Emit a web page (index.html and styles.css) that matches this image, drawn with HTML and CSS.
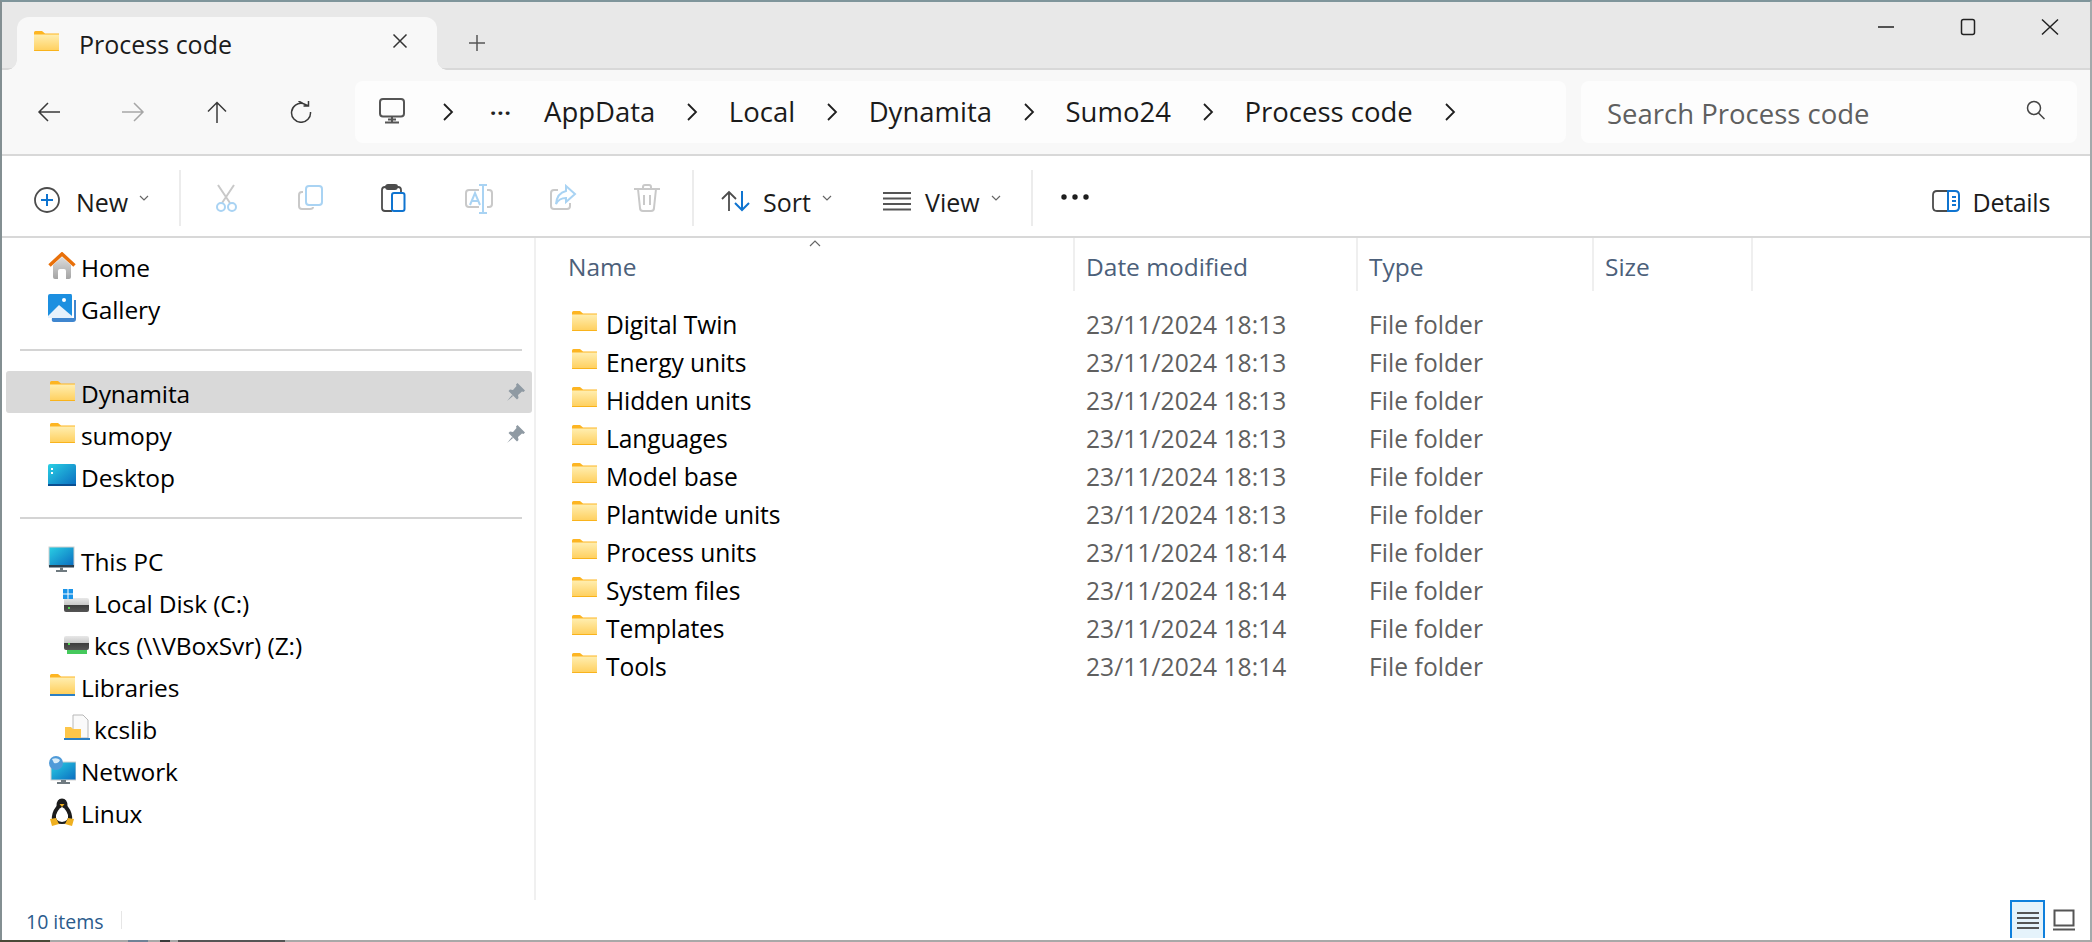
FILE: index.html
```html
<!DOCTYPE html>
<html lang="en">
<head>
<meta charset="utf-8">
<title>Process code</title>
<link rel="stylesheet" href="styles.css">
</head>
<body>
<svg class="defs" width="0" height="0" aria-hidden="true">
  <defs>
    <linearGradient id="fg" x1="0" y1="0" x2="0" y2="1"><stop offset="0" stop-color="#ffeeb0"/><stop offset="1" stop-color="#ffcf5c"/></linearGradient>
    <linearGradient id="hg" x1="0" y1="0" x2="0" y2="1"><stop offset="0" stop-color="#dcdcdc"/><stop offset="1" stop-color="#a4a4a4"/></linearGradient>
    <linearGradient id="bg" x1="0" y1="0" x2="1" y2="1"><stop offset="0" stop-color="#2ad0e4"/><stop offset="1" stop-color="#0a6cc0"/></linearGradient>
    <linearGradient id="dg" x1="0" y1="0" x2="0" y2="1"><stop offset="0" stop-color="#e8e8e8"/><stop offset=".5" stop-color="#c8c8c8"/><stop offset=".5" stop-color="#3c3c3c"/><stop offset="1" stop-color="#555"/></linearGradient>
    <symbol id="folder" viewBox="0 0 25 20">
      <path d="M0 1.5A1.5 1.5 0 0 1 1.5 0H8l3 2.5H25V6H0Z" fill="#fdb522"/>
      <path d="M0 3.500H25V18.500A1.500 1.500 0 0 1 23.500 20H1.500A1.500 1.500 0 0 1 0 18.500Z" fill="url(#fg)"/>
      <path d="M0 19H25V19.500Q25 20 24 20H1Q0 20 0 19.500Z" fill="#f9b31c"/>
    </symbol>
    <symbol id="pin" viewBox="0 0 20 20">
      <path d="M11.500 1 19 8.500 17.500 10 16 9.500 12 13 12.500 16 11 17.500 2.500 9 4 7.500 7 8 10.500 4 10 2.500Z M6 13 1 19 7 14Z" fill="#8f9aa3"/>
    </symbol>
  </defs>
</svg>

<div class="window">
  <header class="titlebar">
    <div class="tab">
      <svg class="tab-folder"><use href="#folder"/></svg>
      <span class="tab-title">Process code</span>
      <svg class="tab-close" viewBox="0 0 16 16"><path d="M1.500 1.500 14.500 14.500M14.500 1.500 1.500 14.500"/></svg>
    </div>
    <svg class="tab-plus" viewBox="0 0 18 18"><path d="M9 1V17M1 9H17"/></svg>
    <div class="winctl">
      <svg class="wc" viewBox="0 0 18 18"><path d="M1 9H17"/></svg>
      <svg class="wc" viewBox="0 0 18 18"><rect x="2.500" y="1.500" width="13" height="15" rx="2"/></svg>
      <svg class="wc" viewBox="0 0 18 18"><path d="M1 1.500 17 16.500M17 1.500 1 16.500"/></svg>
    </div>
  </header>

  <nav class="navbar">
    <div class="navbtn"><svg class="navicon" viewBox="0 0 24 22"><path d="M23 11H2M11 2 2 11l9 9"/></svg></div>
    <div class="navbtn"><svg class="navicon off" viewBox="0 0 24 22"><path d="M1 11H22M13 2l9 9-9 9"/></svg></div>
    <div class="navbtn"><svg class="navicon" viewBox="0 0 24 22"><path d="M12 22V2M3 10.500 12 1.500l9 9"/></svg></div>
    <div class="navbtn"><svg class="navicon" viewBox="0 0 24 22"><path d="M14 2.500A9.500 9.500 0 1 0 21.500 11M14 2.500 9.500 0M14 2.500 19.500 5M19.500 0V5H14.500"/></svg></div>
    <div class="address">
      <svg class="addr-pc" viewBox="0 0 26 26"><rect x="1" y="1" width="24" height="17.500" rx="3"/><path d="M13 18.500V24M6 24.500H20M9 21.500H17"/></svg>
      <svg class="chev chev-first" viewBox="0 0 12 20"><path d="M2 2l8 8-8 8"/></svg>
      <span class="crumb-dots">···</span>
      <span class="crumb">AppData</span>
      <svg class="chev" viewBox="0 0 12 20"><path d="M2 2l8 8-8 8"/></svg>
      <span class="crumb">Local</span>
      <svg class="chev" viewBox="0 0 12 20"><path d="M2 2l8 8-8 8"/></svg>
      <span class="crumb">Dynamita</span>
      <svg class="chev" viewBox="0 0 12 20"><path d="M2 2l8 8-8 8"/></svg>
      <span class="crumb">Sumo24</span>
      <svg class="chev" viewBox="0 0 12 20"><path d="M2 2l8 8-8 8"/></svg>
      <span class="crumb">Process code</span>
      <svg class="chev" viewBox="0 0 12 20"><path d="M2 2l8 8-8 8"/></svg>
    </div>
    <div class="search">
      <span class="search-text">Search Process code</span>
      <svg class="search-icon" viewBox="0 0 20 20"><circle cx="8" cy="8" r="6.500"/><path d="M12.500 13 18.500 19"/></svg>
    </div>
  </nav>

  <div class="toolbar">
    <div class="tb-new">
      <svg class="ic-new" viewBox="0 0 26 26"><circle cx="13" cy="13" r="12" class="st-dark"/><path d="M13 7V19M7 13H19" class="st-blue"/></svg>
      <span class="tb-label">New</span>
      <svg class="mini-chev" viewBox="0 0 10 6"><path d="M1 1 5 5 9 1"/></svg>
    </div>
    <span class="tb-sep"></span>
    <div class="tb-icons">
      <div class="tb-icon"><svg class="ic" viewBox="0 0 28 28"><path d="M5 1 17 19M21 1 9 19" class="st-grey"/><circle cx="8" cy="23" r="4" class="st-lblue"/><circle cx="19" cy="23" r="4" class="st-lblue"/></svg></div>
      <div class="tb-icon"><svg class="ic" viewBox="0 0 28 28"><path d="M6 8H5Q2 8 2 11V22Q2 25 5 25H13Q16 25 16 23" class="st-grey"/><rect x="9" y="2" width="16" height="19" rx="3" class="st-lblue"/></svg></div>
      <div class="tb-icon"><svg class="ic" viewBox="0 0 28 28"><path d="M11 27H4Q1 27 1 24V6Q1 3 4 3H17Q20 3 20 6V8M5 3V2.500Q5 1 7 1H14Q16 1 16 2.500V3Q16 5 14 5H7Q5 5 5 3Z" class="st-dark"/><rect x="11" y="9" width="12.500" height="18" rx="2" class="st-blue"/></svg></div>
      <div class="tb-icon"><svg class="ic ic-w" viewBox="0 0 30 30"><path d="M15 6H5Q2 6 2 9V20Q2 23 5 23H15M23 6H25Q28 6 28 9V20Q28 23 25 23H23" class="st-grey"/><path d="M15 1H23M19 1V29M15 29H23M6 21 11 9 16 21M8 17H14" class="st-lblue"/></svg></div>
      <div class="tb-icon"><svg class="ic" viewBox="0 0 28 28"><path d="M9 6H5Q2 6 2 9V22Q2 25 5 25H18Q21 25 21 22V19" class="st-grey"/><path d="M17 2 26 10 17 18V14Q10 14 7 20 8 9 17 7Z" class="st-lblue"/></svg></div>
      <div class="tb-icon"><svg class="ic" viewBox="0 0 28 28"><path d="M1 5H27M5 5 7 24Q7 27 10 27H18Q21 27 21 24L23 5M10 5V3Q10 1 12 1H16Q18 1 18 3V5M11 11V21M17 11V21" class="st-grey"/></svg></div>
    </div>
    <span class="tb-sep tb-sep-2"></span>
    <div class="tb-sort">
      <svg class="ic-sort" viewBox="0 0 30 22"><path d="M8 21V2M1 9 8 2l7 7" class="st-dark"/><path d="M21 1V20M14 13l7 7 7-7" class="st-blue"/></svg>
      <span class="tb-label">Sort</span>
      <svg class="mini-chev" viewBox="0 0 10 6"><path d="M1 1 5 5 9 1"/></svg>
    </div>
    <div class="tb-view">
      <svg class="ic-view" viewBox="0 0 28 20"><path d="M0 2H28M0 7.500H28M0 13H28M0 18.500H28"/></svg>
      <span class="tb-label">View</span>
      <svg class="mini-chev" viewBox="0 0 10 6"><path d="M1 1 5 5 9 1"/></svg>
    </div>
    <span class="tb-sep tb-sep-3"></span>
    <svg class="ic-more" viewBox="0 0 28 6"><circle cx="3" cy="3" r="2.700"/><circle cx="14" cy="3" r="2.700"/><circle cx="25" cy="3" r="2.700"/></svg>
    <div class="tb-details">
      <svg class="ic-details" viewBox="0 0 28 22"><path d="M16 1H5Q1 1 1 5V17Q1 21 5 21H16" class="st-dark"/><path d="M16 1H23Q27 1 27 5V17Q27 21 23 21H16Z" class="st-blue"/><path d="M20 7H24M20 11H24M20 15H24" class="st-blue"/></svg>
      <span class="tb-label tb-label-tight">Details</span>
    </div>
  </div>

  <main class="main">
    <aside class="sidebar">
      <div class="row">
        <svg class="row-ic" viewBox="0 0 28 28"><path d="M5 13 14 5 23 13V25Q23 27 21 27H18V19Q18 17 16 17H12Q10 17 10 19V27H7Q5 27 5 25Z" fill="url(#hg)"/><path d="M1.500 13.500 14 2 26.500 13.500" fill="none" stroke="#e8700a" stroke-width="3.500"/></svg>
        <span>Home</span>
      </div>
      <div class="row">
        <svg class="row-ic" viewBox="0 0 28 28"><path d="M4 24H26V6H28V25Q28 28 25 28H6Q3 28 4 24Z" fill="#3f86cf"/><path d="M2 0H23Q24 0 24 2V22Q24 24 22 24H2Q0 24 0 22V2Q0 0 2 0Z" fill="#1c8fe0"/><path d="M0 22 11 11 24 22V24H0Z" fill="#e6f1fb"/><circle cx="16" cy="6" r="2" fill="#fff"/></svg>
        <span>Gallery</span>
      </div>
      <div class="side-sep side-sep-a"></div>
      <div class="row row-mid row-active">
        <svg class="row-folder"><use href="#folder"/></svg>
        <span>Dynamita</span>
        <svg class="row-pin"><use href="#pin"/></svg>
      </div>
      <div class="row row-mid">
        <svg class="row-folder"><use href="#folder"/></svg>
        <span>sumopy</span>
        <svg class="row-pin"><use href="#pin"/></svg>
      </div>
      <div class="row row-mid">
        <svg class="row-ic" viewBox="0 0 28 24"><rect y="0" width="28" height="22" rx="2" fill="url(#bg)"/><rect y="20" width="28" height="2" fill="#0a4f92"/><path d="M3 4H5V6H3ZM3 8H5V10H3Z" fill="#fff"/></svg>
        <span>Desktop</span>
      </div>
      <div class="side-sep side-sep-b"></div>
      <div class="row">
        <svg class="row-ic" viewBox="0 0 28 28"><rect x="1" y="1" width="25" height="19" fill="url(#bg)" stroke="#cfcfcf"/><rect x="1" y="19" width="25" height="2.500" fill="#2a3f4f"/><path d="M12 21.500H15V24H12ZM8 24H19V26H8Z" fill="#6f7a80"/></svg>
        <span>This PC</span>
      </div>
      <div class="row row-sub">
        <svg class="row-ic" viewBox="0 0 28 28"><rect x="1" y="10" width="25" height="14" rx="2" fill="url(#dg)"/><rect x="5" y="19" width="2" height="2" fill="#52d452"/><path d="M0 1H4.500V5.500H0ZM5.500 1H10V5.500H5.500ZM0 6.500H4.500V11H0ZM5.500 6.500H10V11H5.500Z" fill="#1a94e8"/></svg>
        <span>Local Disk (C:)</span>
      </div>
      <div class="row row-sub">
        <svg class="row-ic" viewBox="0 0 28 28"><rect x="1" y="6" width="25" height="14" rx="2" fill="url(#dg)"/><rect x="5" y="13" width="2" height="2" fill="#52d452"/><rect x="4" y="20" width="20" height="4" fill="#45c95c"/></svg>
        <span>kcs (\\VBoxSvr) (Z:)</span>
      </div>
      <div class="row">
        <svg class="row-folder row-folder-lib" viewBox="0 0 25 22"><path d="M0 1.500A1.500 1.500 0 0 1 1.500 0H8l3 2.500H25V6H0Z" fill="#fdb522"/><path d="M0 3.500H25V20H0Z" fill="url(#fg)"/><rect y="20" width="25" height="2" fill="#2b7fc4"/></svg>
        <span>Libraries</span>
      </div>
      <div class="row row-sub">
        <svg class="row-ic" viewBox="0 0 28 28"><path d="M10 1H20L25 6V24H10Z" fill="#fafafa" stroke="#b8b8b8"/><path d="M2 13H8L10 15H18V24H2Z" fill="#fdc64a"/><rect x="1" y="24" width="26" height="2" fill="#2b7fc4"/></svg>
        <span>kcslib</span>
      </div>
      <div class="row">
        <svg class="row-ic" viewBox="0 0 28 28"><rect x="3" y="6" width="25" height="18" fill="url(#bg)" stroke="#cfcfcf"/><path d="M13 24H18V26H22V28H9V26H13Z" fill="#6f7a80"/><circle cx="8" cy="7" r="7" fill="#4f9ad8"/><path d="M4 3Q9 1 12 4 10 8 6 7Z" fill="#d8ecf8"/></svg>
        <span>Network</span>
      </div>
      <div class="row">
        <svg class="row-ic" viewBox="0 0 28 28"><path d="M14 0.500Q19.500 0.500 19.500 8Q25 15 24 22Q22 26 14 26Q6 26 4 22Q3 15 8.500 8Q8.500 0.500 14 0.500Z" fill="#1c1c1c"/><path d="M14 9Q18 11 20 17Q21 23 14 24Q7 23 8 17Q10 11 14 9Z" fill="#fff"/><path d="M11.500 6H16.500L14 9Z" fill="#efb020"/><path d="M2 21 8 20 11 26 4 28ZM26 21 20 20 17 26 24 28Z" fill="#efb020"/></svg>
        <span>Linux</span>
      </div>
    </aside>

    <section class="list">
      <svg class="sort-caret" viewBox="0 0 12 7"><path d="M1 6 6 1 11 6"/></svg>
      <div class="cols list-head">
        <div class="col-h col-name">Name</div>
        <div class="col-h">Date modified</div>
        <div class="col-h">Type</div>
        <div class="col-h">Size</div>
      </div>
      <div class="cols file"><div class="file-name"><svg class="file-ic"><use href="#folder"/></svg>Digital Twin</div><div class="cell">23/11/2024 18:13</div><div class="cell">File folder</div></div>
      <div class="cols file"><div class="file-name"><svg class="file-ic"><use href="#folder"/></svg>Energy units</div><div class="cell">23/11/2024 18:13</div><div class="cell">File folder</div></div>
      <div class="cols file"><div class="file-name"><svg class="file-ic"><use href="#folder"/></svg>Hidden units</div><div class="cell">23/11/2024 18:13</div><div class="cell">File folder</div></div>
      <div class="cols file"><div class="file-name"><svg class="file-ic"><use href="#folder"/></svg>Languages</div><div class="cell">23/11/2024 18:13</div><div class="cell">File folder</div></div>
      <div class="cols file"><div class="file-name"><svg class="file-ic"><use href="#folder"/></svg>Model base</div><div class="cell">23/11/2024 18:13</div><div class="cell">File folder</div></div>
      <div class="cols file"><div class="file-name"><svg class="file-ic"><use href="#folder"/></svg>Plantwide units</div><div class="cell">23/11/2024 18:13</div><div class="cell">File folder</div></div>
      <div class="cols file"><div class="file-name"><svg class="file-ic"><use href="#folder"/></svg>Process units</div><div class="cell">23/11/2024 18:14</div><div class="cell">File folder</div></div>
      <div class="cols file"><div class="file-name"><svg class="file-ic"><use href="#folder"/></svg>System files</div><div class="cell">23/11/2024 18:14</div><div class="cell">File folder</div></div>
      <div class="cols file"><div class="file-name"><svg class="file-ic"><use href="#folder"/></svg>Templates</div><div class="cell">23/11/2024 18:14</div><div class="cell">File folder</div></div>
      <div class="cols file"><div class="file-name"><svg class="file-ic"><use href="#folder"/></svg>Tools</div><div class="cell">23/11/2024 18:14</div><div class="cell">File folder</div></div>
    </section>
  </main>

  <footer class="status">
    <span class="status-text">10 items</span>
    <span class="status-sep"></span>
    <div class="view-btn">
      <svg class="vb-ic" viewBox="0 0 22 18"><path d="M0 2H22M0 7H22M0 12H22M0 17H22"/></svg>
    </div>
    <svg class="vb-ic vb-tile" viewBox="0 0 22 22"><rect x="1.500" y="1.500" width="19" height="15"/><path d="M0 20.500H22"/></svg>
  </footer>
</div>
<div class="desktop-strip"></div>
</body>
</html>
```

FILE: styles.css
```css
* { box-sizing: border-box; }
html, body { margin: 0; padding: 0; }
body {
  width: 2092px;
  height: 942px;
  overflow: hidden;
  background: #a8a8a8;
  font-family: "Open Sans", "Noto Sans", sans-serif;
  color: #1a1a1a;
}
.defs { display: block; height: 0; }
svg { display: block; flex: none; fill: none; }

.window {
  width: 2092px;
  height: 940px;
  display: flex;
  flex-direction: column;
  background: #fff;
  border-top: 2px solid #7f959b;
  border-left: 2px solid #838f92;
  border-right: 2px solid #a3a9ab;
}
.desktop-strip {
  height: 2px;
  background: linear-gradient(90deg, #4a4a38 0 50px, #a8a8a8 50px 128px, #6f8296 128px 148px, #a8a8a8 148px 160px, #3a3a3a 160px 170px, #a8a8a8 170px 178px, #555 178px 285px, #a8a8a8 285px);
}

/* title bar */
.titlebar {
  height: 68px;
  flex: none;
  display: flex;
  align-items: flex-end;
  background: #e8e8e8;
  border-bottom: 2px solid #d8d8d8;
  padding-left: 15px;
  position: relative;
}
.tab {
  width: 420px;
  height: 53px;
  margin-bottom: -2px;
  background: #f8f8f8;
  border-radius: 12px 12px 0 0;
  display: flex;
  align-items: center;
  padding: 0 0 2px 17px;
  position: relative;
}
.tab::before, .tab::after {
  content: "";
  position: absolute;
  bottom: 0;
  width: 10px;
  height: 10px;
}
.tab::before { left: -10px; background: radial-gradient(circle at 0 0, transparent 9.500px, #f8f8f8 10px); }
.tab::after { right: -10px; background: radial-gradient(circle at 100% 0, transparent 9.500px, #f8f8f8 10px); }
.tab-folder { width: 25px; height: 20px; margin: -4px 0 0 0; }
.tab-title { margin-left: 20px; font-size: 25px; color: #1b1b1b; line-height: 30px; margin-top: 3px; }
.tab-close { width: 16px; height: 16px; margin-left: auto; margin-right: 29px; stroke: #333; stroke-width: 1.500; margin-top: -4px; }
.tab-plus { width: 18px; height: 18px; stroke: #555; stroke-width: 1.500; margin: 0 0 16px 31px; }
.winctl { margin-left: auto; align-self: flex-start; display: flex; gap: 64px; margin-top: 16px; padding-right: 31px; }
.wc { width: 18px; height: 18px; stroke: #222; stroke-width: 1.500; }

/* nav bar */
.navbar {
  height: 86px;
  flex: none;
  display: flex;
  align-items: flex-start;
  background: #f8f8f8;
  border-bottom: 2px solid #d8d8d8;
  padding: 11px 0 0 5px;
}
.navbtn { width: 84px; height: 62px; display: flex; align-items: center; justify-content: center; }
.navicon { width: 24px; height: 22px; stroke: #3a3a3a; stroke-width: 1.500; }
.navicon.off { stroke: #a6a6a6; }
.address {
  width: 1211px;
  height: 62px;
  margin-left: 12px;
  background: #fdfdfd;
  border-radius: 8px;
  display: flex;
  align-items: center;
  padding-left: 24px;
}
.addr-pc { width: 26px; height: 26px; stroke: #555; stroke-width: 2; margin-top: -2px; }
.chev { width: 12px; height: 20px; stroke: #1e1e1e; stroke-width: 1.800; margin: 0 30.500px 0 31px; }
.chev-first { margin: 0 0 0 37px; }
.crumb-dots { width: 22px; margin-left: 36px; margin-right: 32px; font-size: 22px; font-weight: 700; line-height: 1; letter-spacing: 1px; color: #222; white-space: nowrap; }
.crumb { font-size: 27.500px; color: #1b1b1b; white-space: nowrap; line-height: 34px; margin-top: -1px; }
.search {
  width: 496px;
  height: 62px;
  margin-left: 15px;
  background: #fdfdfd;
  border-radius: 8px;
  display: flex;
  align-items: center;
  padding: 2px 31px 0 26px;
}
.search-text { font-size: 27.500px; color: #5f5f5f; white-space: nowrap; }
.search-icon { width: 20px; height: 20px; margin-left: auto; margin-top: -6px; stroke: #444; stroke-width: 1.500; }

/* tool bar */
.toolbar {
  height: 82px;
  flex: none;
  display: flex;
  align-items: center;
  background: #fff;
  border-bottom: 2px solid #d8d8d8;
}
.st-dark { stroke: #4c4c4c; stroke-width: 1.800; fill: none; }
.st-blue { stroke: #0f74d0; stroke-width: 2; fill: none; }
.st-grey { stroke: #c9c9c9; stroke-width: 2; fill: none; }
.st-lblue { stroke: #a9d3f3; stroke-width: 2; fill: none; }
.tb-label { font-size: 25px; color: #1b1b1b; line-height: 32px; margin-top: 12px; }
.tb-label-tight { letter-spacing: -.3px; }
.tb-new { width: 177px; display: flex; align-items: center; padding-left: 32px; }
.ic-new { width: 26px; height: 26px; margin: 8px 16px 0 0; }
.mini-chev { width: 10px; height: 6px; stroke: #666; stroke-width: 1.200; margin: 4px 0 0 11px; }
.tb-sep { width: 2px; height: 56px; background: #ececec; flex: none; margin-top: 4px; }
.tb-icons { display: flex; margin-left: 4px; }
.tb-icon { width: 84px; display: flex; justify-content: center; margin-top: 6px; }
.ic { width: 28px; height: 28px; }
.ic-w { width: 30px; height: 30px; }
.tb-sep-2 { margin-left: 3px; }
.tb-sort { display: flex; align-items: center; margin-left: 27px; width: 162px; }
.ic-sort { width: 30px; height: 22px; margin: 10px 12px 0 0; }
.tb-view { display: flex; align-items: center; width: 148px; }
.ic-view { width: 28px; height: 20px; stroke: #555; stroke-width: 2; margin: 10px 14px 0 0; }
.ic-more { width: 28px; height: 6px; fill: #1e1e1e; margin: 2px 0 0 28px; }
.tb-details { margin-left: auto; display: flex; align-items: center; padding-right: 40px; }
.ic-details { width: 28px; height: 22px; margin: 10px 13px 0 0; }

/* main */
.main { height: 662px; flex: none; display: flex; }
.sidebar { width: 534px; flex: none; border-right: 2px solid #f0f0f0; padding: 9px 2px 0 4px; }
.row {
  height: 42px;
  display: flex;
  align-items: center;
  padding-left: 42px;
  font-size: 24.500px;
  letter-spacing: -.1px;
  color: #000;
  border-radius: 3px;
  white-space: nowrap;
}
.row span { margin-left: 5px; margin-top: -2px; }
.row-active { background: #d9d9d9; }
.row-sub { padding-left: 57px; }
.row-sub span { margin-left: 3px; }
.row-ic { width: 28px; height: 28px; margin-top: -4px; }
.row-folder { width: 25px; height: 20px; margin: -6px 1.500px 0 1.500px; }
.row-folder-lib { height: 22px; }
.row-pin { width: 20px; height: 20px; margin: -1px 6px 0 auto; }
.row-mid span { margin-top: 2px; }
.row-mid .row-folder { margin-top: -3px; }
.row-mid .row-ic { margin-top: 0; }
.side-sep { height: 2px; background: #d4d4d4; margin-left: 14px; width: 502px; }
.side-sep-a { margin-top: 18px; margin-bottom: 20px; }
.side-sep-b { margin-top: 20px; margin-bottom: 22px; }

.list { flex: 1; position: relative; }
.sort-caret { position: absolute; left: 273px; top: 2px; width: 12px; height: 7px; stroke: #666; stroke-width: 1.200; }
.cols { display: grid; grid-template-columns: 539px 283px 236px 159px; }
.list-head { height: 53px; margin-bottom: 14px; }
.col-h {
  font-size: 24.500px;
  color: #4c607a;
  display: flex;
  align-items: center;
  padding: 3px 0 0 11px;
  border-right: 2px solid #efefef;
}
.col-name { padding-left: 32px; }
.file { height: 38px; align-items: center; font-size: 24.600px; }
.file-name { display: flex; align-items: center; padding-left: 36px; color: #000; white-space: nowrap; letter-spacing: -.1px; }
.file-ic { width: 25px; height: 20px; margin: -6px 9px 0 0; }
.cell { padding-left: 11px; color: #5f5f5f; white-space: nowrap; letter-spacing: .05px; }

/* status */
.status { height: 38px; flex: none; display: flex; align-items: flex-start; background: #fff; padding-left: 24px; }
.status-text { font-size: 19.500px; color: #2b5b8c; margin-top: 7px; line-height: 30px; white-space: nowrap; width: 95px; }
.status-sep { width: 1px; height: 18px; background: #e6e6e6; margin-top: 11px; }
.view-btn {
  width: 35px;
  height: 38px;
  margin-left: auto;
  background: #e5f3fb;
  border: 2px solid #0f80dc;
  border-bottom: none;
  display: flex;
  align-items: center;
  justify-content: center;
}
.vb-ic { width: 22px; height: 18px; stroke: #555; stroke-width: 2; }
.vb-tile { height: 22px; margin: 9px 15px 0 8px; }
```
